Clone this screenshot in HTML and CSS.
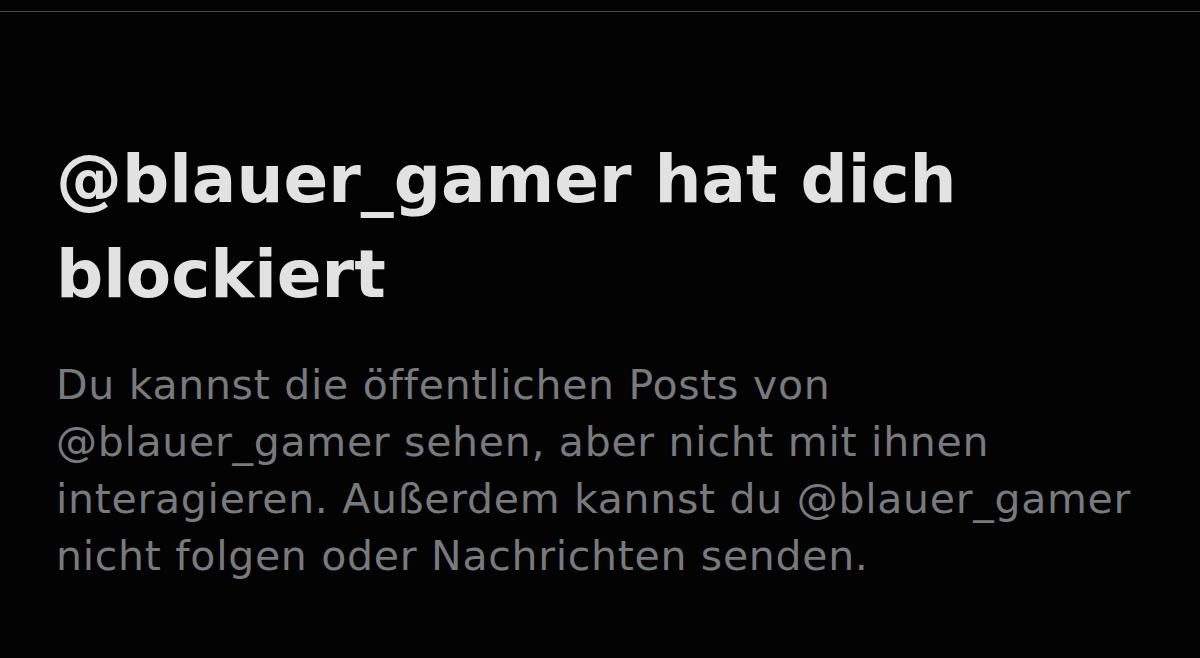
FILE: index.html
```html
<!DOCTYPE html>
<html lang="de">
<head>
    <meta charset="UTF-8">
    <meta name="viewport" content="width=device-width, initial-scale=1.0">
    <title>Blockiert</title>
    <link rel="stylesheet" href="styles.css">
</head>
<body>

<!-- Trennlinie oben -->
<div class="top-rule"></div>

<!-- Hinweis: Konto blockiert -->
<div class="blocked-notice">
    <h1 class="blocked-title">@blauer_gamer hat dich blockiert</h1>
    <p class="blocked-text">Du kannst die öffentlichen Posts von @blauer_gamer sehen, aber nicht mit ihnen interagieren. Außerdem kannst du @blauer_gamer nicht folgen oder Nachrichten senden.</p>
</div>

</body>
</html>
```

FILE: styles.css
```css
body {
    margin: 0;
    background-color: #030303;
    font-family: "DejaVu Sans", sans-serif;
    height: 658px;
    overflow: hidden;
}
.top-rule {
    margin-top: 11px;
    height: 1px;
    background-color: #4a4a4a;
}
.blocked-notice {
    padding: 120px 60px 0 56px;
}
.blocked-title {
    margin: 0;
    max-width: 960px;
    font-size: 66px;
    line-height: 95px;
    font-weight: bold;
    color: #e2e2e2;
}
.blocked-text {
    margin: 35px 0 0 0;
    max-width: 1080px;
    font-size: 41px;
    line-height: 57px;
    letter-spacing: 0.7px;
    color: #787a7e;
}
```
